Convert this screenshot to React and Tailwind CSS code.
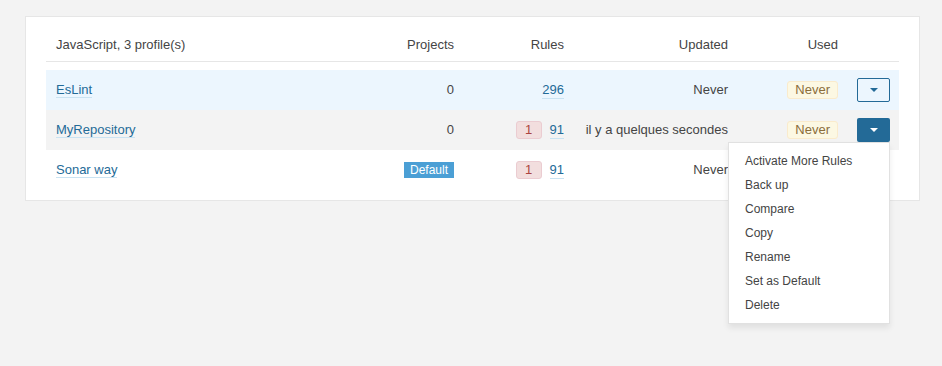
import React from 'react';

const rows = [
  { name: 'EsLint', projects: '0', alerts: null, rules: '296', updated: 'Never', used: 'Never', bg: 'bg-[#ecf6fe]', btn: 'outline' },
  { name: 'MyRepository', projects: '0', alerts: '1', rules: '91', updated: 'il y a quelques secondes', used: 'Never', bg: 'bg-[#f3f3f3]', btn: 'filled', open: true },
  { name: 'Sonar way', projects: 'default', alerts: '1', rules: '91', updated: 'Never', used: null, bg: 'bg-white', btn: null },
];

const menuItems = ['Activate More Rules', 'Back up', 'Compare', 'Copy', 'Rename', 'Set as Default', 'Delete'];

const Caret = ({ color }) => (
  <svg width="8" height="4" viewBox="0 0 8 4"><path d="M0 0h8L4 4z" fill={color} /></svg>
);

const cols = 'grid grid-cols-[318px_100px_110px_164px_110px_52px] items-center';

export default function App() {
  return (
    <div className="min-h-[366px] bg-[#f3f3f3] pt-4 pl-[25px] pr-[22px] text-[13px] text-[#444]" style={{ fontFamily: '"Liberation Sans", Arial, sans-serif' }}>
      <div className="bg-white border border-[#e6e6e6] px-5 pt-4 pb-[10px]">
        <div className={`${cols} h-[29px] border-b border-[#e6e6e6] pb-1`}>
          <div className="px-[10px]">JavaScript, 3 profile(s)</div>
          <div className="px-[10px] text-right">Projects</div>
          <div className="px-[10px] text-right">Rules</div>
          <div className="px-[10px] text-right">Updated</div>
          <div className="px-[10px] text-right">Used</div>
          <div />
        </div>
        <div className="mt-2">
          {rows.map((r) => (
            <div key={r.name} className={`${cols} h-10 ${r.bg}`}>
              <div className="px-[10px]">
                <a className="text-[#236a97] border-b border-[#cae3f2] leading-[16px]">{r.name}</a>
              </div>
              <div className="px-[10px] flex justify-end">
                {r.projects === 'default' ? (
                  <span className="bg-[#4b9fd5] text-white text-[12px] px-[6px] leading-[16px]">Default</span>
                ) : (
                  <span>{r.projects}</span>
                )}
              </div>
              <div className="px-[10px] flex justify-end items-center gap-2">
                {r.alerts && (
                  <span className="bg-[#f2dede] border border-[#ebccd1] text-[#a94442] rounded-[3px] w-[26px] h-[18px] flex items-center justify-center">{r.alerts}</span>
                )}
                <a className="text-[#236a97] border-b border-[#cae3f2] leading-[16px]">{r.rules}</a>
              </div>
              <div className="px-[10px] text-right whitespace-nowrap">{r.updated}</div>
              <div className="px-[10px] flex justify-end">
                {r.used && (
                  <span className="bg-[#fcf8e3] border border-[#faebcc] text-[#8a6d3b] rounded-[3px] px-[7px] leading-[16px] h-[18px]">{r.used}</span>
                )}
              </div>
              <div className="pr-[10px] flex justify-end relative">
                {r.btn === 'outline' && (
                  <button className="w-[33px] h-6 border border-[#236a97] rounded-[2px] flex items-center justify-center">
                    <Caret color="#236a97" />
                  </button>
                )}
                {r.btn === 'filled' && (
                  <button className="w-[33px] h-6 bg-[#236a97] rounded-[2px] flex items-center justify-center">
                    <Caret color="#fff" />
                  </button>
                )}
                {r.open && (
                  <div className="absolute right-[10px] top-6 z-10 w-[162px] bg-white border border-[#e1e1e1] shadow-[0_4px_6px_rgba(0,0,0,0.08)] py-[6px] text-[12px]">
                    {menuItems.map((m) => (
                      <div key={m} className="px-4 h-6 flex items-center whitespace-nowrap text-[#444]">{m}</div>
                    ))}
                  </div>
                )}
              </div>
            </div>
          ))}
        </div>
      </div>
    </div>
  );
}
